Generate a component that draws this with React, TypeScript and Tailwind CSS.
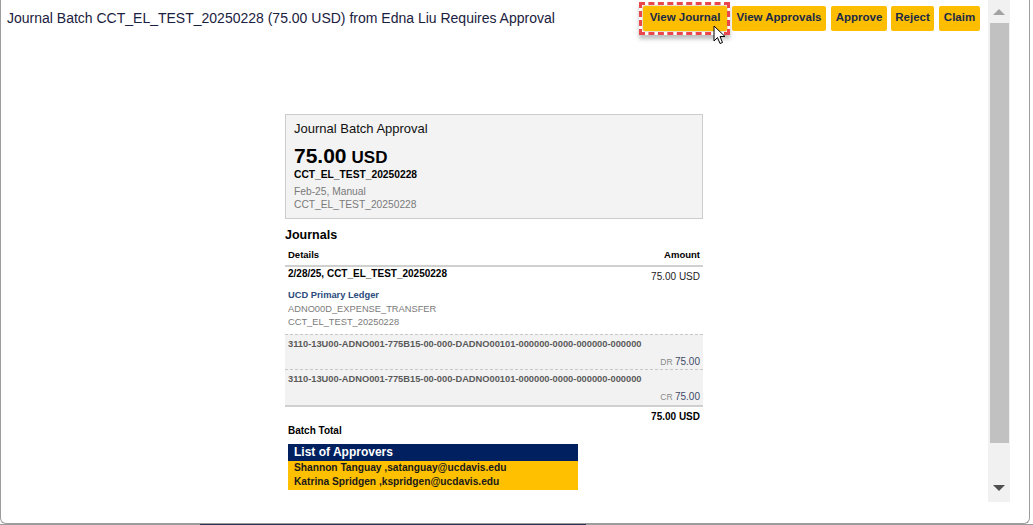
import React from 'react';

const actions = [
  { label: 'View Journal', width: 'w-[84px]', gap: '' },
  { label: 'View Approvals', width: 'w-[94px]', gap: 'ml-[5px]' },
  { label: 'Approve', width: 'w-[56px]', gap: 'ml-[5px]' },
  { label: 'Reject', width: 'w-[43px]', gap: 'ml-[4px]' },
  { label: 'Claim', width: 'w-[41px]', gap: 'ml-[5px]' },
];

const accountLines = [
  { account: '3110-13U00-ADNO001-775B15-00-000-DADNO00101-000000-0000-000000-000000', side: 'DR', amount: '75.00' },
  { account: '3110-13U00-ADNO001-775B15-00-000-DADNO00101-000000-0000-000000-000000', side: 'CR', amount: '75.00' },
];

const approvers = [
  'Shannon Tanguay ,satanguay@ucdavis.edu',
  'Katrina Spridgen ,kspridgen@ucdavis.edu',
];

function Cursor() {
  return (
    <svg width="14" height="20" viewBox="0 0 14 20" className="absolute left-[70px] top-[19px]">
      <path d="M1 1 L1 16 L4.5 12.5 L7 18.5 L9.5 17.5 L7 11.5 L12 11.5 Z" fill="#fff" stroke="#000" strokeWidth="1" strokeLinejoin="round" />
    </svg>
  );
}

function Scrollbar() {
  return (
    <div className="w-[22px] h-[502px] bg-[#f1f1f1] flex flex-col items-center">
      <div className="h-[23px] w-full flex items-center justify-center">
        <div className="w-0 h-0 border-l-[6px] border-r-[6px] border-b-[6px] border-l-transparent border-r-transparent border-b-[#a3a3a3]" />
      </div>
      <div className="w-[19px] h-[420px] bg-[#c1c1c1]" />
      <div className="flex-1 w-full flex items-center justify-center pt-[30px]">
        <div className="w-0 h-0 border-l-[6px] border-r-[6px] border-t-[6px] border-l-transparent border-r-transparent border-t-[#505050]" />
      </div>
    </div>
  );
}

export default function App() {
  return (
    <div className="w-[1033px] h-[525px] bg-white font-['Liberation_Sans',Arial,sans-serif] flex flex-col overflow-hidden">
      <div className="w-[1030px] h-[524px] flex border-l border-r border-b border-[#9c9c9c] rounded-b-[6px] overflow-hidden">
        {/* Main content */}
        <div className="w-[987px] flex flex-col">
          <div className="flex items-center justify-between pl-[6px] pr-[8px] pt-[5px]">
            <div className="text-[14px] text-[#1a2140] leading-[26px]">
              Journal Batch CCT_EL_TEST_20250228 (75.00 USD) from Edna Liu Requires Approval
            </div>
            <div className="flex">
              {actions.map((a, i) => (
                <div key={a.label} className={`relative ${a.gap}`}>
                  <button
                    className={`${a.width} h-[25px] bg-[#fdbd00] rounded-[2px] text-[11.5px] font-bold text-[#1b2a48] flex items-center justify-center ${i === 0 ? 'ring-1 ring-[#e8e0c8]' : ''}`}
                  >
                    {a.label}
                  </button>
                  {i === 0 && (
                    <>
                      <div className="absolute left-[-4px] top-[-4px] w-[91px] h-[33px] border-[3px] border-dashed border-[#e9474b] shadow-[0_4px_4px_rgba(0,0,0,0.25)]" />
                      <Cursor />
                    </>
                  )}
                </div>
              ))}
            </div>
          </div>

          {/* Email body */}
          <div className="w-[418px] ml-[284px] mt-[83px]">
            <div className="bg-[#f3f3f3] border border-[#cdcdcd] pt-[6px] px-[8px] pb-[7px]">
              <div className="text-[13px] leading-[16px] text-[#111]">Journal Batch Approval</div>
              <div className="mt-[7px] h-[24px] flex items-baseline gap-[5px] font-bold text-black">
                <span className="text-[21px] leading-[24px]">75.00</span>
                <span className="text-[17px] leading-[24px]">USD</span>
              </div>
              <div className="text-[10.25px] leading-[14px] font-bold text-black">CCT_EL_TEST_20250228</div>
              <div className="mt-[3px] text-[10.25px] leading-[13px] text-[#7a7a7a]">
                <div>Feb-25, Manual</div>
                <div>CCT_EL_TEST_20250228</div>
              </div>
            </div>

            <div className="mt-[8px] text-[12.5px] leading-[16px] font-bold text-black">Journals</div>

            <div className="mt-[5px] flex justify-between px-[3px] pb-[3px] border-b-2 border-[#d0d0d0] text-[9.5px] leading-[14px] font-bold text-black">
              <span>Details</span>
              <span>Amount</span>
            </div>

            <div className="h-[13px] flex justify-between items-start px-[3px]">
              <span className="text-[10px] leading-[13px] font-bold text-black">2/28/25, CCT_EL_TEST_20250228</span>
              <span className="mt-[3px] text-[10px] leading-[13px] text-[#222]">75.00 USD</span>
            </div>

            <div className="mt-[9px] px-[3px] pb-[4px] text-[9.3px] leading-[13.5px]">
              <div className="font-bold text-[#2b4b7c]">UCD Primary Ledger</div>
              <div className="text-[#7a7a7a]">ADNO00D_EXPENSE_TRANSFER</div>
              <div className="text-[#7a7a7a]">CCT_EL_TEST_20250228</div>
            </div>

            <div className="bg-[#f2f2f2] border-t border-dashed border-[#c8c8c8]">
              {accountLines.map((l, i) => (
                <div
                  key={i}
                  className={`px-[3px] pt-[3px] ${i === 0 ? 'pb-[1px] border-b border-dashed border-[#c8c8c8]' : 'pb-[2px] border-b-2 border-solid border-[#d0d0d0]'}`}
                >
                  <div className="text-[9.3px] leading-[12px] font-bold text-[#5a5a5a]">{l.account}</div>
                  <div className="mt-[4px] text-right leading-[12px]">
                    <span className="text-[8.5px] text-[#8a8a8a]">{l.side} </span>
                    <span className="text-[10px] text-[#3d4a66]">{l.amount}</span>
                  </div>
                </div>
              ))}
            </div>

            <div className="mt-[4px] px-[3px] text-right text-[10px] leading-[12px] font-bold text-black">75.00 USD</div>
            <div className="mt-[2px] px-[3px] text-[10px] leading-[12px] font-bold text-black">Batch Total</div>

            <div className="ml-[3px] mt-[7px] w-[290px]">
              <div className="bg-[#002060] h-[17px] pl-[6px] text-[12px] leading-[17px] font-bold text-white">List of Approvers</div>
              <div className="bg-[#ffc000] pl-[6px] pb-[1px] text-[10.2px] leading-[14px] font-bold text-[#1a1a1a]">
                {approvers.map((a) => (
                  <div key={a}>{a}</div>
                ))}
              </div>
            </div>
          </div>
        </div>

        <Scrollbar />
      </div>
      <div className="h-[1px] flex">
        <div className="w-[200px] bg-[#9c9c9c]" />
        <div className="w-[386px] bg-[#2a3350]" />
        <div className="flex-1 bg-[#9c9c9c]" />
      </div>
    </div>
  );
}
